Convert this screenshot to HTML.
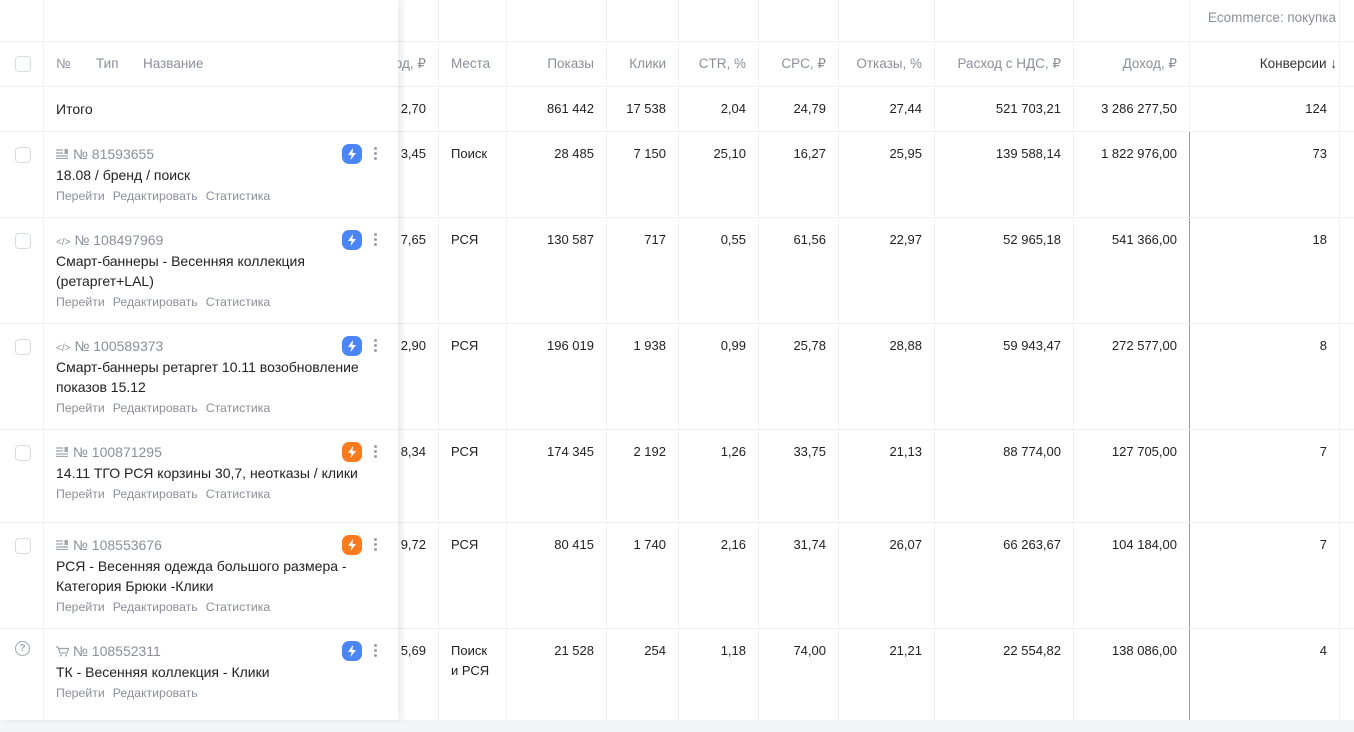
<!DOCTYPE html><html><head><meta charset="utf-8"><style>
body{margin:0;width:1354px;height:732px;overflow:hidden;background:#fff;font-family:"Liberation Sans",sans-serif;font-size:13px;color:#222;position:relative}
.a{position:absolute;white-space:nowrap;line-height:20px}
.r{text-align:right}
.h{color:#8a8f99;font-size:13.5px}
.vl{position:absolute;top:0;width:1px;height:720px;background:#eef0f4}
.hl{position:absolute;height:1px;background:#eef0f4}
.lp{position:absolute;left:0;top:0;width:398px;height:720px;background:#fff;box-shadow:4px 0 6px rgba(0,0,0,.08)}
.cb{position:absolute;left:15px;width:14px;height:14px;border:1px solid #d8dbe2;border-radius:4px}
.num{color:#8a8f99;font-size:14px}
.t{font-size:14px}
.lk{color:#8a8f99;font-size:12.3px}
.lk span{margin-right:8px}
.bo{position:absolute;left:342px;width:20px;height:20px;border-radius:7px;background:#4a86f7}
.bo.o{background:#fb7a1d}
.bo svg{position:absolute;left:5px;top:4px}
.dots{position:absolute;left:374px;width:4px}
.dots i{display:block;width:3px;height:3px;border-radius:50%;background:#9aa0aa;margin-bottom:2px}
</style></head><body>
<div class="vl" style="left:438px"></div><div class="vl" style="left:506px"></div><div class="vl" style="left:606px"></div><div class="vl" style="left:678px"></div><div class="vl" style="left:758px"></div><div class="vl" style="left:838px"></div><div class="vl" style="left:934px"></div><div class="vl" style="left:1073px"></div><div class="vl" style="left:1339px;"></div>
<div class="vl" style="left:1189px;height:131px"></div>
<div style="position:absolute;left:1189px;top:131px;width:1px;height:601px;background:#9a9ea6"></div>
<div class="hl" style="left:0;width:1354px;top:41px"></div>
<div class="hl" style="left:0;width:1354px;top:86px"></div>
<div class="hl" style="left:0;width:1354px;top:131px"></div>
<div class="hl" style="left:0;width:1354px;top:217px"></div>
<div class="hl" style="left:0;width:1354px;top:323px"></div>
<div class="hl" style="left:0;width:1354px;top:429px"></div>
<div class="hl" style="left:0;width:1354px;top:522px"></div>
<div class="hl" style="left:0;width:1354px;top:628px"></div>
<div style="position:absolute;left:0;top:720px;width:1354px;height:12px;background:#f4f5f8"></div>
<div class="a h r" style="right:18px;top:8px;width:200px">Ecommerce: покупка</div>
<!-- header -->
<div class="a h r" style="right:928px;top:54px">Доход, ₽</div>
<div class="a h" style="left:451px;top:54px">Места</div>
<div class="a h r" style="right:760px;top:54px">Показы</div>
<div class="a h r" style="right:688px;top:54px">Клики</div>
<div class="a h r" style="right:608px;top:54px">CTR, %</div>
<div class="a h r" style="right:528px;top:54px">CPC, ₽</div>
<div class="a h r" style="right:432px;top:54px">Отказы, %</div>
<div class="a h r" style="right:293px;top:54px">Расход с НДС, ₽</div>
<div class="a h r" style="right:177px;top:54px">Доход, ₽</div>
<div class="a r" style="right:17px;top:54px;color:#333;font-size:13.5px">Конверсии ↓</div>
<!-- rows: right cols -->
<div class="a r" style="right:928px;top:99px">2,70</div><div class="a r" style="right:760px;top:99px">861 442</div><div class="a r" style="right:688px;top:99px">17 538</div><div class="a r" style="right:608px;top:99px">2,04</div><div class="a r" style="right:528px;top:99px">24,79</div><div class="a r" style="right:432px;top:99px">27,44</div><div class="a r" style="right:293px;top:99px">521 703,21</div><div class="a r" style="right:177px;top:99px">3 286 277,50</div><div class="a r" style="right:27px;top:99px">124</div>

<div class="a r" style="right:928px;top:144px">3,45</div><div class="a" style="left:451px;top:144px">Поиск</div><div class="a r" style="right:760px;top:144px">28 485</div><div class="a r" style="right:688px;top:144px">7 150</div><div class="a r" style="right:608px;top:144px">25,10</div><div class="a r" style="right:528px;top:144px">16,27</div><div class="a r" style="right:432px;top:144px">25,95</div><div class="a r" style="right:293px;top:144px">139 588,14</div><div class="a r" style="right:177px;top:144px">1 822 976,00</div><div class="a r" style="right:27px;top:144px">73</div>

<div class="a r" style="right:928px;top:230px">7,65</div><div class="a" style="left:451px;top:230px">РСЯ</div><div class="a r" style="right:760px;top:230px">130 587</div><div class="a r" style="right:688px;top:230px">717</div><div class="a r" style="right:608px;top:230px">0,55</div><div class="a r" style="right:528px;top:230px">61,56</div><div class="a r" style="right:432px;top:230px">22,97</div><div class="a r" style="right:293px;top:230px">52 965,18</div><div class="a r" style="right:177px;top:230px">541 366,00</div><div class="a r" style="right:27px;top:230px">18</div>

<div class="a r" style="right:928px;top:336px">2,90</div><div class="a" style="left:451px;top:336px">РСЯ</div><div class="a r" style="right:760px;top:336px">196 019</div><div class="a r" style="right:688px;top:336px">1 938</div><div class="a r" style="right:608px;top:336px">0,99</div><div class="a r" style="right:528px;top:336px">25,78</div><div class="a r" style="right:432px;top:336px">28,88</div><div class="a r" style="right:293px;top:336px">59 943,47</div><div class="a r" style="right:177px;top:336px">272 577,00</div><div class="a r" style="right:27px;top:336px">8</div>

<div class="a r" style="right:928px;top:442px">8,34</div><div class="a" style="left:451px;top:442px">РСЯ</div><div class="a r" style="right:760px;top:442px">174 345</div><div class="a r" style="right:688px;top:442px">2 192</div><div class="a r" style="right:608px;top:442px">1,26</div><div class="a r" style="right:528px;top:442px">33,75</div><div class="a r" style="right:432px;top:442px">21,13</div><div class="a r" style="right:293px;top:442px">88 774,00</div><div class="a r" style="right:177px;top:442px">127 705,00</div><div class="a r" style="right:27px;top:442px">7</div>

<div class="a r" style="right:928px;top:535px">9,72</div><div class="a" style="left:451px;top:535px">РСЯ</div><div class="a r" style="right:760px;top:535px">80 415</div><div class="a r" style="right:688px;top:535px">1 740</div><div class="a r" style="right:608px;top:535px">2,16</div><div class="a r" style="right:528px;top:535px">31,74</div><div class="a r" style="right:432px;top:535px">26,07</div><div class="a r" style="right:293px;top:535px">66 263,67</div><div class="a r" style="right:177px;top:535px">104 184,00</div><div class="a r" style="right:27px;top:535px">7</div>

<div class="a r" style="right:928px;top:641px">5,69</div><div class="a" style="left:451px;top:641px">Поиск<br>и РСЯ</div><div class="a r" style="right:760px;top:641px">21 528</div><div class="a r" style="right:688px;top:641px">254</div><div class="a r" style="right:608px;top:641px">1,18</div><div class="a r" style="right:528px;top:641px">74,00</div><div class="a r" style="right:432px;top:641px">21,21</div><div class="a r" style="right:293px;top:641px">22 554,82</div><div class="a r" style="right:177px;top:641px">138 086,00</div><div class="a r" style="right:27px;top:641px">4</div>

<!-- left panel -->
<div class="lp">
<div style="position:absolute;left:43px;top:0;width:1px;height:720px;background:#eef0f4"></div>
<div class="hl" style="left:0;width:398px;top:41px"></div>
<div class="hl" style="left:0;width:398px;top:86px"></div>
<div class="hl" style="left:0;width:398px;top:131px"></div>
<div class="hl" style="left:0;width:398px;top:217px"></div>
<div class="hl" style="left:0;width:398px;top:323px"></div>
<div class="hl" style="left:0;width:398px;top:429px"></div>
<div class="hl" style="left:0;width:398px;top:522px"></div>
<div class="hl" style="left:0;width:398px;top:628px"></div>
<div class="cb" style="top:56px"></div>
<div class="a h" style="left:56px;top:54px">№</div><div class="a h" style="left:96px;top:54px">Тип</div><div class="a h" style="left:143px;top:54px">Название</div>
<div class="a t" style="left:56px;top:99px">Итого</div>

<div class="cb" style="top:147px"></div>
<div class="a num" style="left:56px;top:144px"><svg width="13" height="10" viewBox="0 0 13 10" style="vertical-align:0"><path d="M0 1h7M0 4h7M0 7h12M0 9.5h12" stroke="#a0a5ae" stroke-width="1.3"/><rect x="8.5" y="0" width="3.5" height="5" fill="#a0a5ae"/></svg> № 81593655</div>
<div class="a t" style="left:56px;top:165px">18.08 / бренд / поиск</div>
<div class="a lk" style="left:56px;top:186px"><span>Перейти</span><span>Редактировать</span><span>Статистика</span></div>
<div class="bo" style="top:144px"><svg width="10" height="12" viewBox="0 0 10 12"><path d="M6 0L1 7h3.5L3.5 12 9 5H5.5z" fill="#fff"/></svg></div>
<div class="dots" style="top:147px"><i></i><i></i><i></i></div>

<div class="cb" style="top:233px"></div>
<div class="a num" style="left:56px;top:230px"><span style="font-size:10px">&lt;/&gt;</span> № 108497969</div>
<div class="a t" style="left:56px;top:251px">Смарт-баннеры - Весенняя коллекция<br>(ретаргет+LAL)</div>
<div class="a lk" style="left:56px;top:292px"><span>Перейти</span><span>Редактировать</span><span>Статистика</span></div>
<div class="bo" style="top:230px"><svg width="10" height="12" viewBox="0 0 10 12"><path d="M6 0L1 7h3.5L3.5 12 9 5H5.5z" fill="#fff"/></svg></div>
<div class="dots" style="top:233px"><i></i><i></i><i></i></div>

<div class="cb" style="top:339px"></div>
<div class="a num" style="left:56px;top:336px"><span style="font-size:10px">&lt;/&gt;</span> № 100589373</div>
<div class="a t" style="left:56px;top:357px">Смарт-баннеры ретаргет 10.11 возобновление<br>показов 15.12</div>
<div class="a lk" style="left:56px;top:398px"><span>Перейти</span><span>Редактировать</span><span>Статистика</span></div>
<div class="bo" style="top:336px"><svg width="10" height="12" viewBox="0 0 10 12"><path d="M6 0L1 7h3.5L3.5 12 9 5H5.5z" fill="#fff"/></svg></div>
<div class="dots" style="top:339px"><i></i><i></i><i></i></div>

<div class="cb" style="top:445px"></div>
<div class="a num" style="left:56px;top:442px"><svg width="13" height="10" viewBox="0 0 13 10" style="vertical-align:0"><path d="M0 1h7M0 4h7M0 7h12M0 9.5h12" stroke="#a0a5ae" stroke-width="1.3"/><rect x="8.5" y="0" width="3.5" height="5" fill="#a0a5ae"/></svg> № 100871295</div>
<div class="a t" style="left:56px;top:463px">14.11 ТГО РСЯ корзины 30,7, неотказы / клики</div>
<div class="a lk" style="left:56px;top:484px"><span>Перейти</span><span>Редактировать</span><span>Статистика</span></div>
<div class="bo o" style="top:442px"><svg width="10" height="12" viewBox="0 0 10 12"><path d="M6 0L1 7h3.5L3.5 12 9 5H5.5z" fill="#fff"/></svg></div>
<div class="dots" style="top:445px"><i></i><i></i><i></i></div>

<div class="cb" style="top:538px"></div>
<div class="a num" style="left:56px;top:535px"><svg width="13" height="10" viewBox="0 0 13 10" style="vertical-align:0"><path d="M0 1h7M0 4h7M0 7h12M0 9.5h12" stroke="#a0a5ae" stroke-width="1.3"/><rect x="8.5" y="0" width="3.5" height="5" fill="#a0a5ae"/></svg> № 108553676</div>
<div class="a t" style="left:56px;top:556px">РСЯ - Весенняя одежда большого размера -<br>Категория Брюки -Клики</div>
<div class="a lk" style="left:56px;top:597px"><span>Перейти</span><span>Редактировать</span><span>Статистика</span></div>
<div class="bo o" style="top:535px"><svg width="10" height="12" viewBox="0 0 10 12"><path d="M6 0L1 7h3.5L3.5 12 9 5H5.5z" fill="#fff"/></svg></div>
<div class="dots" style="top:538px"><i></i><i></i><i></i></div>

<div style="position:absolute;left:15px;top:641px;width:13px;height:13px;border:1.5px solid #a0a5ae;border-radius:50%;color:#a0a5ae;font-size:10px;line-height:13px;text-align:center;font-weight:bold">?</div>
<div class="a num" style="left:56px;top:641px"><svg width="13" height="11" viewBox="0 0 13 11" style="vertical-align:-1px"><path d="M0 1h2l2 6h7l1.5-4.5H3" fill="none" stroke="#a0a5ae" stroke-width="1.2"/><circle cx="5" cy="9.5" r="1" fill="#a0a5ae"/><circle cx="10" cy="9.5" r="1" fill="#a0a5ae"/></svg> № 108552311</div>
<div class="a t" style="left:56px;top:662px">ТК - Весенняя коллекция - Клики</div>
<div class="a lk" style="left:56px;top:683px"><span>Перейти</span><span>Редактировать</span></div>
<div class="bo" style="top:641px"><svg width="10" height="12" viewBox="0 0 10 12"><path d="M6 0L1 7h3.5L3.5 12 9 5H5.5z" fill="#fff"/></svg></div>
<div class="dots" style="top:644px"><i></i><i></i><i></i></div>
</div>
</body></html>
